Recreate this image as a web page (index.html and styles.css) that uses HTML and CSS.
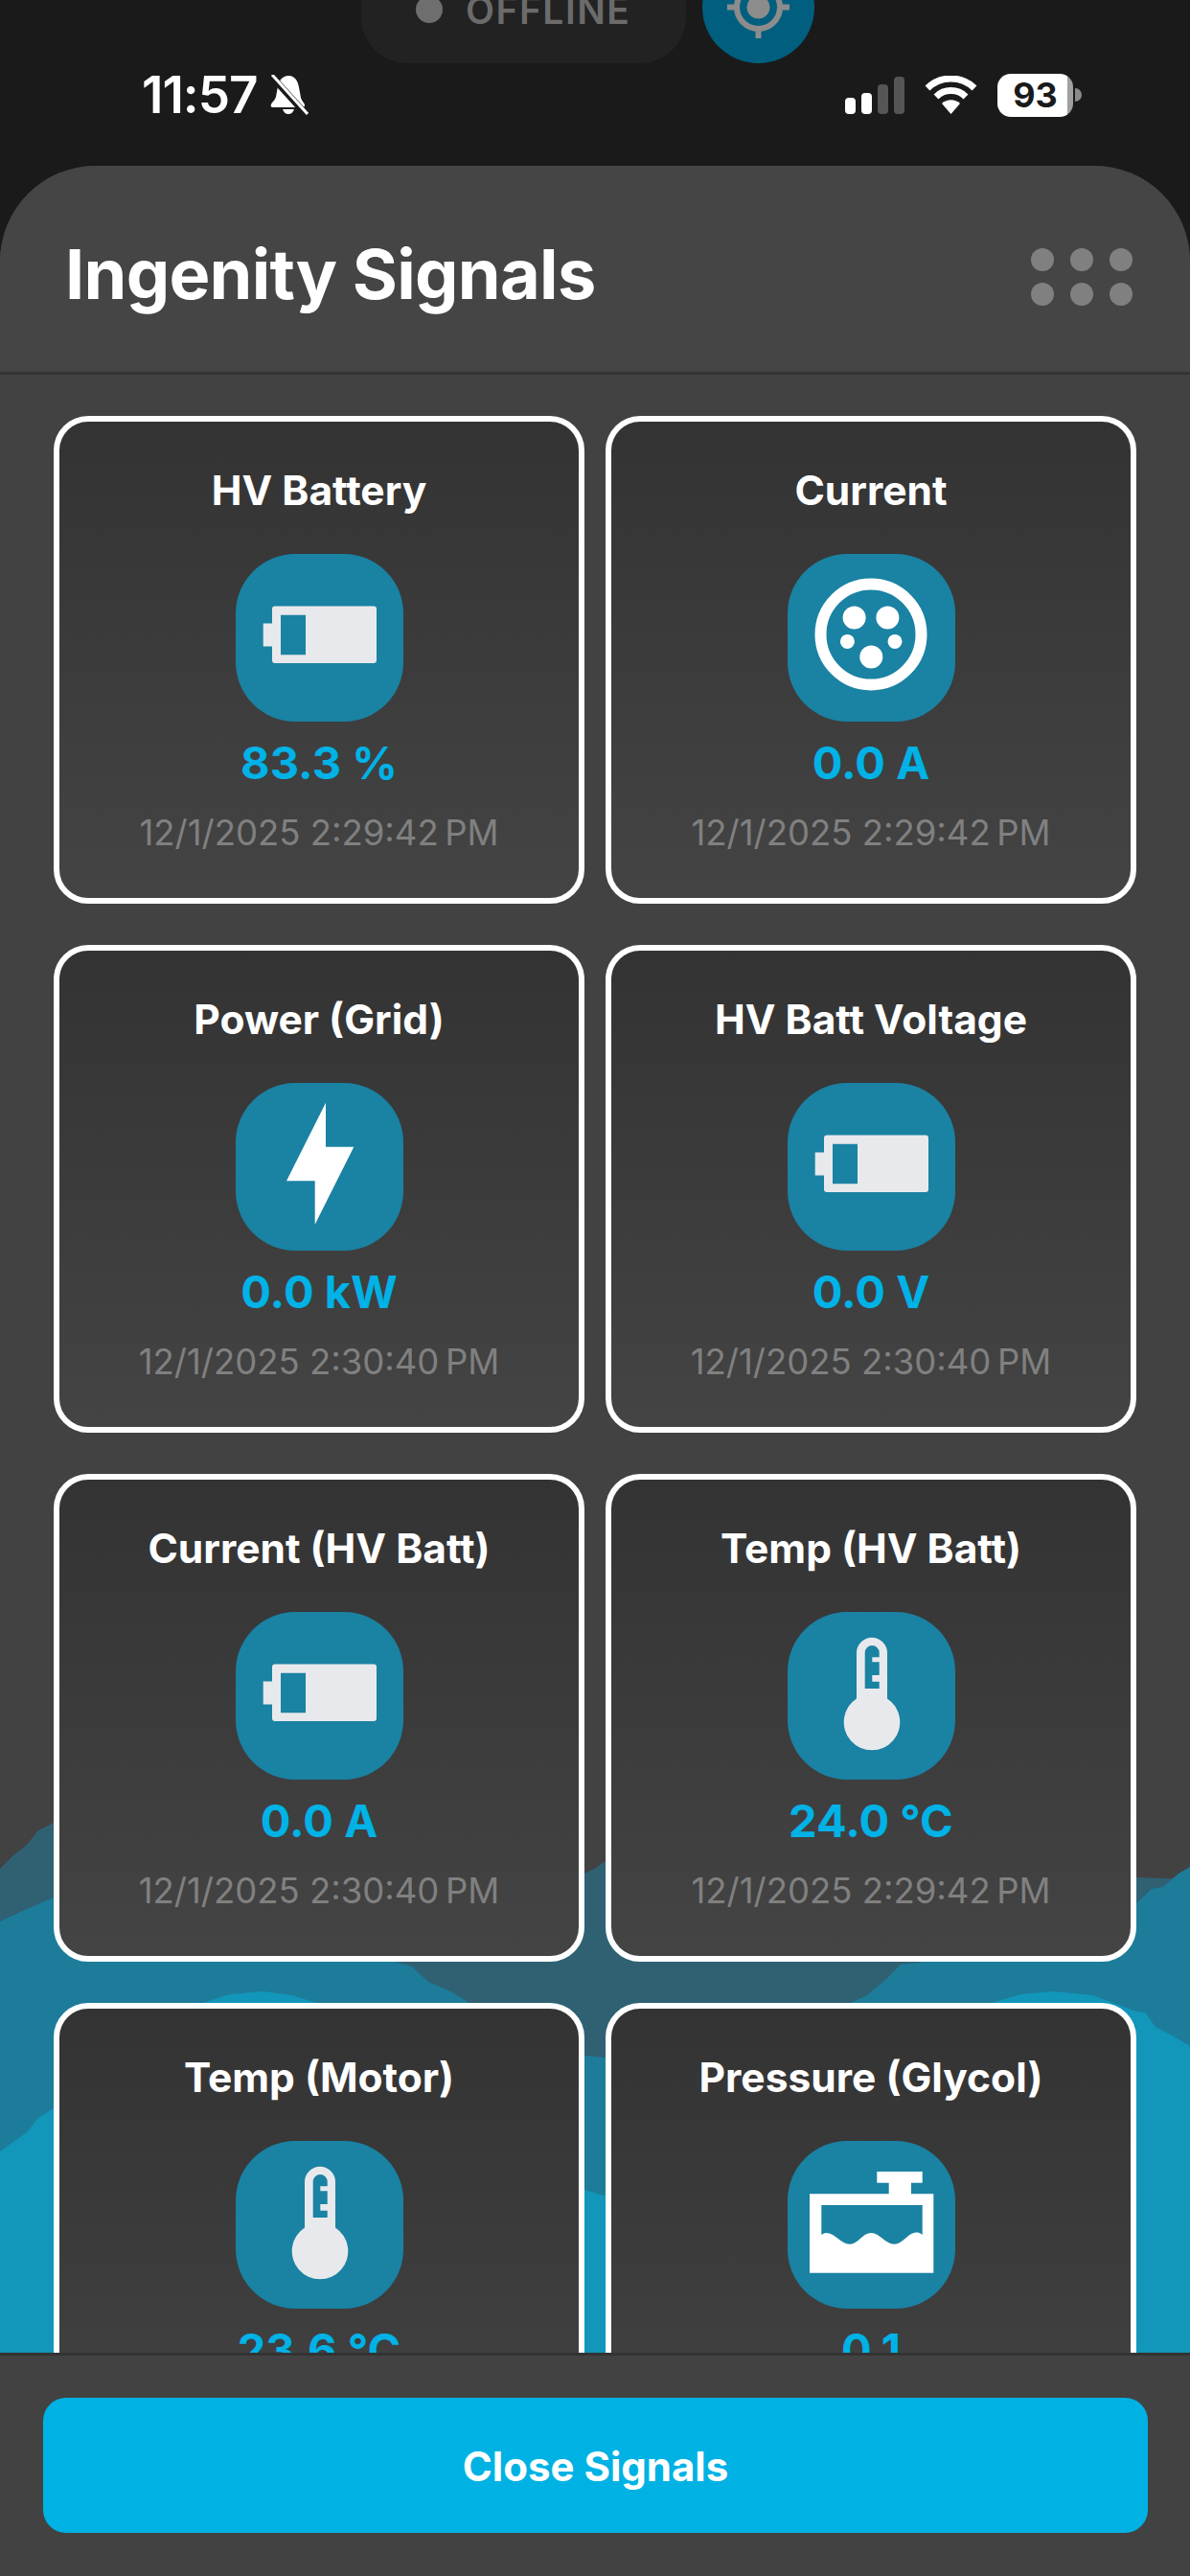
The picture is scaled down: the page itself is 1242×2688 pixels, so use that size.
FILE: index.html
```html
<!DOCTYPE html>
<html lang="en">
<head>
  <meta charset="UTF-8" />
  <meta name="viewport" content="width=device-width, initial-scale=1.0"/>
  <title>Ingenity Signals</title>
  <link rel="stylesheet" href="styles.css">
</head>
<body>

  <svg class="icon-defs" width="0" height="0">
    <symbol id="i-battery" viewBox="0 0 175 175">
      <path fill="#e8e9ec" fill-rule="evenodd" d="M41 54.5H144a3 3 0 0 1 3 3V111a3 3 0 0 1-3 3H41a3 3 0 0 1-3-3V96.6H28.7V72.6H38V57.500a3 3 0 0 1 3-3ZM47 63.800V105.200H73V63.800Z"/>
    </symbol>
    <symbol id="i-socket" viewBox="0 0 175 175">
      <circle cx="87" cy="84" r="52.500" fill="none" stroke="#fff" stroke-width="12"/>
      <g fill="#fff">
        <circle cx="69.600" cy="66.600" r="12"/>
        <circle cx="104.400" cy="66.600" r="12"/>
        <circle cx="62.400" cy="91.400" r="7.500"/>
        <circle cx="112" cy="91.400" r="7.500"/>
        <circle cx="87.300" cy="107.600" r="12"/>
      </g>
    </symbol>
    <symbol id="i-bolt" viewBox="0 0 175 175">
      <path fill="#fff" d="M94 20.700V66.700H123.300L82.700 147.700V102.300H53Z"/>
    </symbol>
    <symbol id="i-thermo" viewBox="0 0 175 175">
      <path fill="#e8e9ec" fill-rule="evenodd" d="M72 42.700a16 16 0 0 1 32 0V90.500a29.300 29.300 0 1 1-32 0ZM80.700 42.500V80H95.700V72.700H88.300V66H95.700V52.300H88.300V47.300H95.700V42.500a7.500 7.500 0 0 0-15 0Z"/>
    </symbol>
    <symbol id="i-tank" viewBox="0 0 175 175">
      <path fill="#fff" fill-rule="evenodd" d="M93.300 32H140.700V43.700H129V55.300H152.300V137.700H23V55.300H105.700V43.700H93.300ZM35.300 67V98C37 97 38 96 40 96C50 96 55 107.700 65 107.700C74 107.700 78 96 87.300 96C96 96 102 107.700 111.300 107.700C120 107.700 125 97 132 96C134 95.500 137 95 140.700 98V67Z"/>
    </symbol>
  </svg>

  <div class="map-controls">
    <div class="offline-pill"><span class="offline-dot"></span>OFFLINE</div>
    <div class="locate-btn">
      <svg width="117" height="117" viewBox="0 0 117 117" fill="none" stroke="#8c8c8c">
        <circle cx="58.500" cy="58.500" r="22.500" stroke-width="6"/>
        <circle cx="58.500" cy="58.500" r="12" fill="#8c8c8c" stroke="none"/>
        <path stroke-width="6" d="M26 58.500H36M81 58.500H91M58.500 81V91M58.500 26V36"/>
      </svg>
    </div>
  </div>

  <div class="status-bar">
    <div class="status-left">
      <span class="clock">11:57</span>
      <svg width="42" height="42" viewBox="0 0 42 42">
        <path fill="#fff" d="M21 1C28 1 31 7 32 13L34 24C35 28 38 29 38 32C38 33 37 34 36 34H5C3 34 2 33 3 31C4 28 7 27 8 23L10 12C11 6 15 1 21 1ZM15 36H27C26 39 24 41 21 41C18 41 16 39 15 36Z"/>
        <path stroke="#1a1a1a" stroke-width="7" d="M1 -1L41 43"/>
        <path stroke="#fff" stroke-width="3" d="M4 0L41 41"/>
      </svg>
    </div>
    <div class="status-right">
      <div class="signal">
        <span class="bar bar-1"></span>
        <span class="bar bar-2"></span>
        <span class="bar bar-3"></span>
        <span class="bar bar-4"></span>
      </div>
      <svg width="55" height="40" viewBox="0 0 55 40" fill="none" stroke="#fff" stroke-width="7">
        <path d="M3 13A35 35 0 0 1 52 13"/>
        <path d="M12 22A22 22 0 0 1 43 22"/>
        <path fill="#fff" stroke="none" d="M27.500 40L18 29A14 14 0 0 1 37 29Z"/>
      </svg>
      <div class="battery">
        <div class="battery-body">93</div>
        <span class="battery-nub"></span>
      </div>
    </div>
  </div>

  <div class="sheet">
    <div class="sheet-head">
      <h1>Ingenity Signals</h1>
      <div class="dots">
        <span></span><span></span><span></span>
        <span></span><span></span><span></span>
      </div>
    </div>

    <div class="sheet-scroll">
      <!-- mountains behind the cards -->
      <svg class="waves" width="1242" height="565" viewBox="0 1890 1242 565">
        <path fill="#2f6173" d="M0 1950L15 1935L28 1925L40 1910L56 1902L300 1880L610 1955L622 1949L630 1943L640 1942L1186 1959L1242 1961V2455H0Z"/>
        <path fill="#1d7c9a" d="M0 2005L15 1998L28 1992L56 1980L200 2000L412 2047L430 2052L447 2068L470 2078L490 2090L610 2145L630 2147L888 2090L905 2082L925 2065L940 2050L965 2047L1186 1986L1202 1971L1214 1969L1230 1955L1242 1948V2455H0Z"/>
        <path fill="#1296ba" d="M0 2245L14 2235L28 2225L40 2210L56 2200L212 2090L240 2081L275 2078L305 2082L330 2090L610 2285L630 2291L1035 2090L1065 2081L1100 2078L1140 2082L1186 2099L1195 2100L1206 2115L1225 2125L1242 2135V2455H0Z"/>
      </svg>

      <div class="signal-grid">
        <div class="card">
          <div class="card-title">HV Battery</div>
          <div class="card-icon"><svg width="175" height="175"><use href="#i-battery"/></svg></div>
          <div class="card-value">83.3 %</div>
          <div class="card-time">12/1/2025 2:29:42&#8239;PM</div>
        </div>
        <div class="card">
          <div class="card-title">Current</div>
          <div class="card-icon"><svg width="175" height="175"><use href="#i-socket"/></svg></div>
          <div class="card-value">0.0 A</div>
          <div class="card-time">12/1/2025 2:29:42&#8239;PM</div>
        </div>
        <div class="card">
          <div class="card-title">Power (Grid)</div>
          <div class="card-icon"><svg width="175" height="175"><use href="#i-bolt"/></svg></div>
          <div class="card-value">0.0 kW</div>
          <div class="card-time">12/1/2025 2:30:40&#8239;PM</div>
        </div>
        <div class="card">
          <div class="card-title">HV Batt Voltage</div>
          <div class="card-icon"><svg width="175" height="175"><use href="#i-battery"/></svg></div>
          <div class="card-value">0.0 V</div>
          <div class="card-time">12/1/2025 2:30:40&#8239;PM</div>
        </div>
        <div class="card">
          <div class="card-title">Current (HV Batt)</div>
          <div class="card-icon"><svg width="175" height="175"><use href="#i-battery"/></svg></div>
          <div class="card-value">0.0 A</div>
          <div class="card-time">12/1/2025 2:30:40&#8239;PM</div>
        </div>
        <div class="card">
          <div class="card-title">Temp (HV Batt)</div>
          <div class="card-icon"><svg width="175" height="175"><use href="#i-thermo"/></svg></div>
          <div class="card-value">24.0 °C</div>
          <div class="card-time">12/1/2025 2:29:42&#8239;PM</div>
        </div>
        <div class="card">
          <div class="card-title">Temp (Motor)</div>
          <div class="card-icon"><svg width="175" height="175"><use href="#i-thermo"/></svg></div>
          <div class="card-value">23.6 °C</div>
        </div>
        <div class="card">
          <div class="card-title">Pressure (Glycol)</div>
          <div class="card-icon"><svg width="175" height="175"><use href="#i-tank"/></svg></div>
          <div class="card-value">0.1</div>
        </div>
      </div>
    </div>

    <div class="sheet-foot">
      <button class="close-btn">Close Signals</button>
    </div>
  </div>

</body>
</html>
```

FILE: styles.css
```css
* {
  box-sizing: border-box;
}

html, body {
  margin: 0;
  height: 2688px;
  overflow: hidden;
}

body {
  width: 1242px;
  display: flex;
  flex-direction: column;
  background: #1a1a1a;
  font-family: Inter, "Noto Sans", sans-serif;
  color: #fff;
}

.icon-defs {
  position: absolute;
}

/* map buttons peeking out from under the status bar */
.map-controls {
  display: flex;
  align-items: flex-end;
  gap: 17px;
  height: 117px;
  margin-top: -51px;
  padding-left: 377px;
  flex-shrink: 0;
}

.offline-pill {
  display: flex;
  align-items: center;
  gap: 24px;
  width: 339px;
  height: 110px;
  padding: 0 0 2px 57px;
  border-radius: 48px;
  background: #222;
  color: #6b6b6b;
  font-size: 39px;
  font-weight: 600;
  letter-spacing: 1.500px;
}

.offline-dot {
  width: 28px;
  height: 28px;
  border-radius: 50%;
  background: #6e6e6e;
}

.locate-btn {
  width: 117px;
  height: 117px;
  border-radius: 50%;
  background: #005f7f;
}

.status-bar {
  display: flex;
  justify-content: space-between;
  align-items: center;
  height: 107px;
  padding: 0 113px 0 148px;
  flex-shrink: 0;
}

.status-left {
  display: flex;
  align-items: center;
  gap: 11px;
  margin-top: -42px;
}

.clock {
  font-size: 53px;
  font-weight: 600;
  line-height: 50px;
  letter-spacing: -1px;
}

.status-right {
  display: flex;
  align-items: center;
  gap: 21px;
  margin-top: -41px;
}

.signal {
  display: flex;
  align-items: flex-end;
  gap: 6px;
  height: 40px;
}

.bar {
  width: 11px;
  border-radius: 4px;
  background: #fff;
}

.bar-1 { height: 17px; }
.bar-2 { height: 22px; }
.bar-3 { height: 31px; background: #555; }
.bar-4 { height: 39px; background: #555; }

.battery {
  display: flex;
  align-items: center;
}

.battery-body {
  width: 79px;
  height: 45px;
  border-radius: 14px;
  background: linear-gradient(to right, #fff 92%, #a0a0a0 92%);
  color: #1a1a1a;
  font-size: 36px;
  font-weight: 700;
  line-height: 45px;
  text-align: center;
}

.battery-nub {
  width: 7px;
  height: 14px;
  margin-left: 2px;
  border-radius: 0 7px 7px 0;
  background: #8a8a8a;
}

.sheet {
  flex: 1;
  min-height: 0;
  display: flex;
  flex-direction: column;
  border-radius: 100px 100px 0 0;
  background: #424242;
  overflow: hidden;
}

.sheet-head {
  display: flex;
  justify-content: space-between;
  align-items: center;
  height: 218px;
  padding: 10px 60px 0 68px;
  border-bottom: 3px solid #333;
  background: #454545;
  flex-shrink: 0;
}

h1 {
  margin: 0;
  font-size: 72px;
  font-weight: 700;
  letter-spacing: -0.700px;
}

.dots {
  display: grid;
  grid-template-columns: repeat(3, 24px);
  grid-auto-rows: 24px;
  gap: 12px 17px;
  margin-top: 6px;
}

.dots span {
  border-radius: 50%;
  background: #808080;
}

.sheet-scroll {
  position: relative;
  flex: 1;
  min-height: 0;
  overflow: hidden;
}

.waves {
  position: absolute;
  left: 0;
  bottom: 0;
}

.signal-grid {
  position: relative;
  display: grid;
  grid-template-columns: 554px 554px;
  grid-auto-rows: 509px;
  gap: 43px 22px;
  padding: 43px 56px 0;
}

.card {
  display: flex;
  flex-direction: column;
  align-items: center;
  padding-top: 47px;
  border: 6px solid #fff;
  border-radius: 36px;
  background: linear-gradient(#333, #444);
}

.card-title {
  font-size: 42.500px;
  font-weight: 700;
  line-height: 50px;
}

.card-icon {
  width: 175px;
  height: 175px;
  margin-top: 41px;
  border-radius: 62px;
  background: #1a82a3;
}

.card-icon svg {
  display: block;
}

.card-value {
  margin-top: 15px;
  color: #00b2e6;
  font-size: 47px;
  font-weight: 700;
  line-height: 56px;
}

.card-time {
  margin-top: 23px;
  color: #808080;
  font-size: 36.500px;
  line-height: 44px;
}

.sheet-foot {
  height: 233px;
  padding: 44px 44px 0 45px;
  border-top: 3px solid #333;
  background: #424242;
  flex-shrink: 0;
}

.close-btn {
  display: block;
  width: 100%;
  height: 141px;
  padding: 2px 0 0;
  border: none;
  border-radius: 24px;
  background: #00b2e4;
  color: #fff;
  font-family: inherit;
  font-size: 42px;
  font-weight: 700;
}
```
